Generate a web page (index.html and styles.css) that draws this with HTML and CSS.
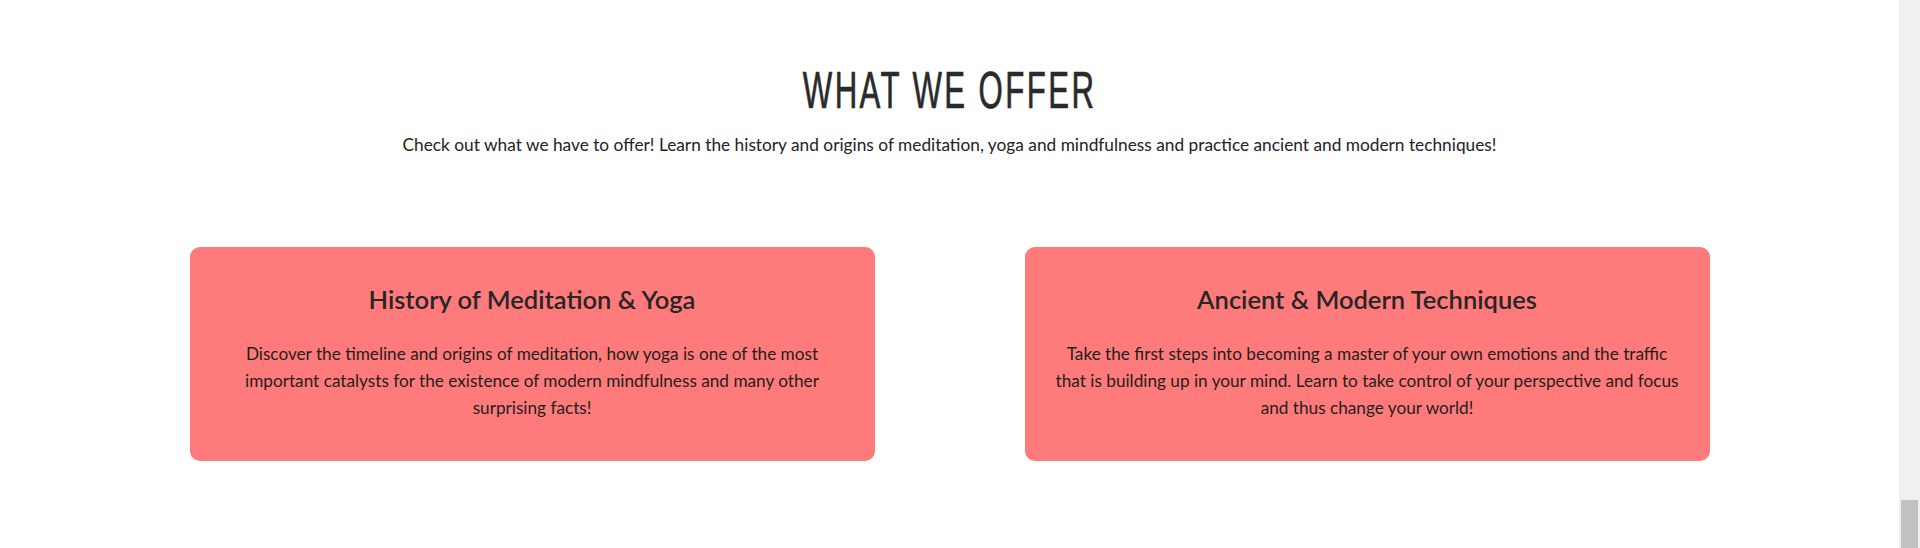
FILE: index.html
```html
<!DOCTYPE html>
<html lang="en">
<head>
<meta charset="utf-8">
<title>What We Offer</title>
<link rel="stylesheet" href="styles.css">
</head>
<body>
<main class="page">
  <section class="offer">
    <header class="offer-head">
      <h1 class="offer-title"><span class="offer-title-text">WHAT WE OFFER</span></h1>
      <p class="offer-sub">Check out what we have to offer! Learn the history and origins of meditation, yoga and mindfulness and practice ancient and modern techniques!</p>
    </header>
    <div class="cards">
      <article class="card">
        <h2 class="card-title">History of Meditation &amp; Yoga</h2>
        <p class="card-text">Discover the timeline and origins of meditation, how yoga is one of the most important catalysts for the existence of modern mindfulness and many other surprising facts!</p>
      </article>
      <article class="card">
        <h2 class="card-title">Ancient &amp; Modern Techniques</h2>
        <p class="card-text">Take the first steps into becoming a master of your own emotions and the traffic that is building up in your mind. Learn to take control of your perspective and focus and thus change your world!</p>
      </article>
    </div>
  </section>
</main>
<div class="scrollbar"><div class="scrollbar-thumb"></div></div>
</body>
</html>
```
FILE: styles.css
```css
html, body {
  margin: 0;
  padding: 0;
  height: 548px;
  overflow: hidden;
  background: #ffffff;
}
body {
  display: flex;
  font-family: Lato, "Noto Sans", sans-serif;
  color: #222222;
}
.page {
  flex: 1;
  min-width: 0;
}
.offer {
  padding-top: 60px;
}
.offer-head {
  text-align: center;
}
.offer-title {
  margin: 0;
  font-family: "Liberation Sans Narrow", "Liberation Sans", sans-serif;
  font-weight: 400;
  font-size: 52px;
  line-height: 60px;
  color: #2a2a2a;
}
.offer-title-text {
  display: inline-block;
  transform: scaleX(0.6);
  letter-spacing: 4px;
  -webkit-text-stroke: 0.7px #2a2a2a;
}
.offer-sub {
  margin: 13px 0 0;
  font-size: 17.3px;
  line-height: 24px;
  color: #222222;
}
.cards {
  width: 1520px;
  margin: 90px auto 0;
  display: flex;
  justify-content: space-between;
}
.card {
  width: 685px;
  height: 214px;
  box-sizing: border-box;
  background: #ff7b7b;
  border-radius: 10px;
  padding: 37px 27px 0;
  text-align: center;
}
.card-title {
  margin: 0;
  font-size: 25.5px;
  font-weight: 600;
  line-height: 30px;
  color: #262626;
}
.card-text {
  margin: 26px 0 0;
  font-size: 17.2px;
  line-height: 27px;
  color: #1e1e1e;
}
.scrollbar {
  width: 21px;
  height: 548px;
  background: #f0f0f0;
  display: flex;
  flex-direction: column;
  justify-content: flex-end;
}
.scrollbar-thumb {
  height: 48px;
  margin: 0 2px 0 2px;
  background: #c1c1c1;
}
```
